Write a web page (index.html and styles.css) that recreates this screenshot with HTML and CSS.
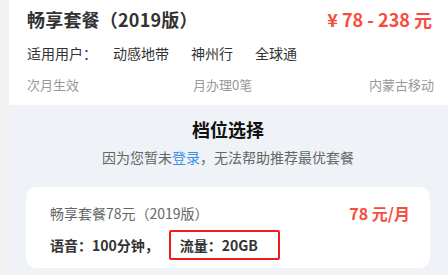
FILE: index.html
```html
<!DOCTYPE html>
<html lang="zh-CN">
<head>
<meta charset="utf-8">
<link rel="stylesheet" href="styles.css">
</head>
<body>
<div class="page">
  <div class="info">
    <div class="row head">
      <div class="title">畅享套餐（2019版）</div>
      <div class="price">¥ 78 - 238 元</div>
    </div>
    <div class="row users">
      <span class="label">适用用户：</span>
      <span class="brand">动感地带</span>
      <span class="brand">神州行</span>
      <span class="brand">全球通</span>
    </div>
    <div class="row meta">
      <span class="m1">次月生效</span>
      <span class="m2">月办理0笔</span>
      <span class="m3">内蒙古移动</span>
    </div>
  </div>
  <div class="tiers">
    <h2 class="tiers-title">档位选择</h2>
    <p class="tiers-sub">因为您暂未<a class="login">登录</a>，无法帮助推荐最优套餐</p>
    <div class="card">
      <div class="card-row">
        <span class="card-name">畅享套餐78元（2019版）</span>
        <span class="card-price">78 元/月</span>
      </div>
      <div class="card-detail">
        <span>语音：100分钟，</span><span class="hl">流量：20GB</span>
      </div>
    </div>
  </div>
</div>
</body>
</html>
```

FILE: styles.css
```css
* { box-sizing: border-box; }
html, body { margin: 0; padding: 0; }
body {
  background: #f2f2f2;
  font-family: "Noto Sans CJK SC", "Noto Sans", sans-serif;
  color: #333;
  width: 448px;
  height: 275px;
  overflow: hidden;
}
.page { margin-left: 9px; }
.info {
  background: #fff;
  padding: 0 18px 6px 18px;
  height: 105px;
}
.row { display: flex; align-items: center; }
.head { height: 37px; justify-content: space-between; }
.title { font-size: 18px; font-weight: bold; color: #333; line-height: 24px; letter-spacing: 0.2px; }
.price { font-size: 18px; font-weight: bold; color: #f74c3c; line-height: 24px; margin-right: -2px; }
.users { height: 32px; font-size: 14px; color: #333; }
.label { width: 86px; }
.brand { margin-right: 22px; }
.meta { height: 30px; font-size: 13px; color: #999; }
.m1 { width: 166px; }
.m2 { flex: 1; }
.m3 { margin-right: -4px; }
.tiers {
  background: #eff3f7;
  height: 170px;
  padding: 12px 18px 0 17px;
}
.tiers-title {
  margin: 0;
  text-align: center;
  font-size: 18px;
  line-height: 24px;
  font-weight: bold;
  color: #111;
}
.tiers-sub {
  margin: 6px 0 0;
  text-align: center;
  font-size: 14px;
  line-height: 20px;
  color: #666;
}
.login { color: #3a8ee6; }
.card {
  margin-top: 20px;
  background: #fff;
  border-radius: 10px;
  height: 81px;
  padding: 15px 20px 0 24px;
}
.card-row {
  display: flex;
  justify-content: space-between;
  align-items: center;
  height: 22px;
}
.card-name { font-size: 14px; color: #666; }
.card-price { font-size: 16px; font-weight: bold; color: #f74c3c; }
.card-detail {
  margin-top: 6px;
  display: flex;
  align-items: center;
  font-size: 14px;
  font-weight: bold;
  color: #333;
  line-height: 20px;
}
.hl {
  border: 2px solid #f01c1c;
  border-radius: 2px;
  padding: 3px 20px 3px 9px;
  margin-left: 10px;
}
```
